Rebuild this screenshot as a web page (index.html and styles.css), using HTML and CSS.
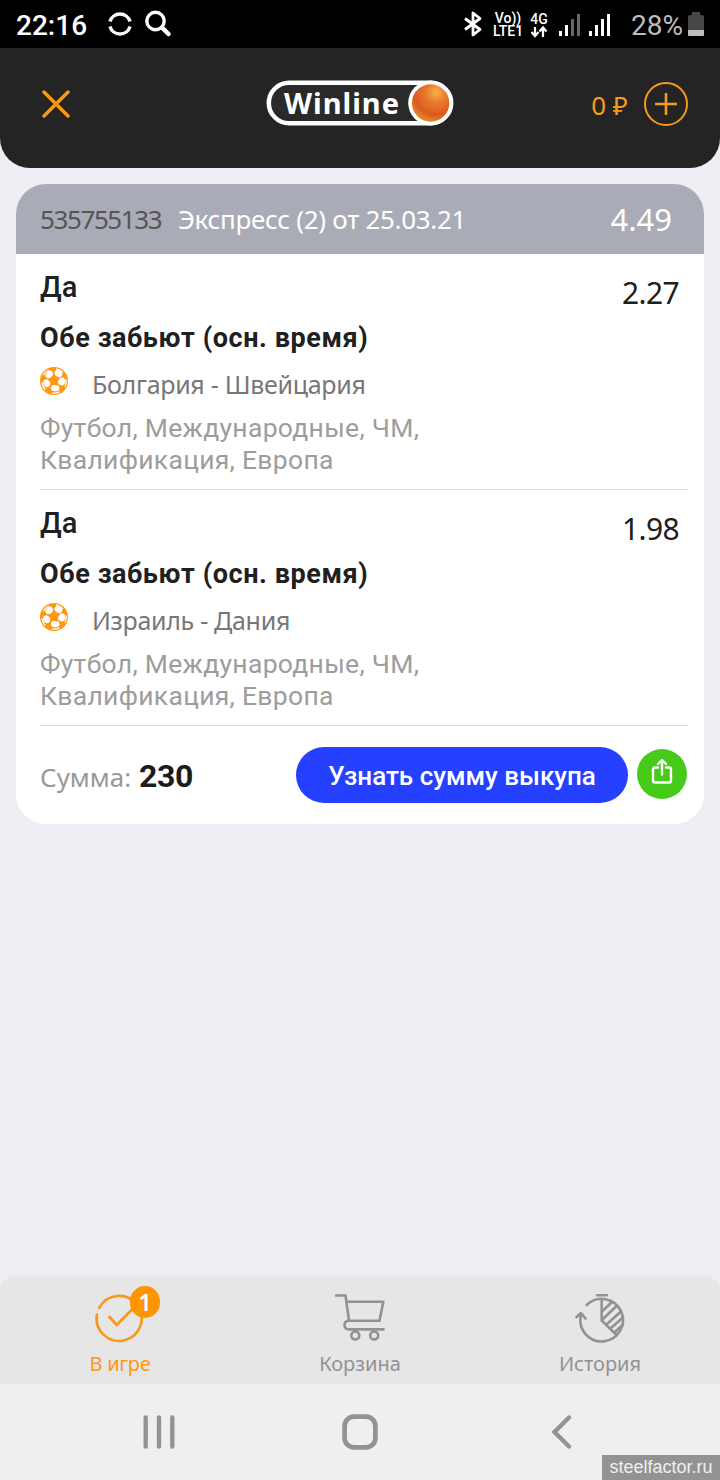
FILE: index.html
```html
<!DOCTYPE html>
<html lang="ru">
<head>
    <meta charset="UTF-8">
    <meta name="viewport" content="width=device-width, initial-scale=1.0">
    <title>Winline - В игре</title>
    <link rel="stylesheet" href="styles.css">
</head>
<body>

    <!-- Иконка мяча, используется в каждом событии -->
    <svg class="sprite" width="0" height="0">
        <symbol id="ball" viewBox="0 0 28 28">
            <circle cx="14" cy="14" r="14" fill="#ff9711"/>
            <circle cx="14" cy="14" r="12.2" fill="none" stroke="#fff" stroke-width="1.3" stroke-dasharray="7.7 7.63" stroke-dashoffset="2"/>
            <g fill="#fff">
                <ellipse cx="9.2" cy="7.4" rx="4.1" ry="3.2" transform="rotate(-38 9.2 7.4)"/>
                <ellipse cx="18.4" cy="6.6" rx="4.1" ry="3.1" transform="rotate(32 18.4 6.6)"/>
                <ellipse cx="21.8" cy="14.4" rx="4" ry="3.5" transform="rotate(-60 21.8 14.4)"/>
                <ellipse cx="15.2" cy="21" rx="4.3" ry="3.3" transform="rotate(5 15.2 21)"/>
                <ellipse cx="6.6" cy="16.2" rx="4" ry="3.4" transform="rotate(55 6.6 16.2)"/>
            </g>
            <path d="M14 8l1.4 4.1 4.2.2-3.2 2.7.9 4.1-3.5-2.2-3.7 1.9 1.1-4-3-2.9 4.3-.1z" fill="#ff9711"/>
        </symbol>
    </svg>

    <div class="status-bar">
        <span class="time">22:16</span>
        <svg class="sync" width="24" height="24" viewBox="0 0 24 24" fill="none" stroke="#fff" stroke-width="3.4">
            <path d="M2 9.5A10.4 10.4 0 0 1 22 9.5M2 14.5A10.4 10.4 0 0 0 22 14.5"/>
        </svg>
        <svg class="search" width="28" height="28" viewBox="0 0 28 28" fill="none" stroke="#fff">
            <circle cx="11.5" cy="11" r="8.7" stroke-width="3.4"/>
            <path d="M18 17.5L24.5 24" stroke-width="4.5" stroke-linecap="round"/>
        </svg>
        <svg class="bluetooth" width="20" height="26" viewBox="0 0 20 26" fill="none" stroke="#fff" stroke-width="2.8" stroke-linejoin="round">
            <path d="M2 7.5L17 18.5L10 24V2L17 7.5L2 18.5"/>
        </svg>
        <span class="net volte"><span>Vo))</span><span>LTE1</span></span>
        <span class="net data">
            <span>4G</span>
            <svg width="18" height="12" viewBox="0 0 18 12" fill="none" stroke="#fff" stroke-width="2.2">
                <path d="M5 1V9.5M1.5 6L5 10L8.5 6M13 11V2M9.5 5.5L13 1.5L16.5 5.5"/>
            </svg>
        </span>
        <svg class="signal" width="22" height="24" viewBox="0 0 22 24">
            <g fill="#fff"><rect x="0" y="19" width="3" height="5"/><rect x="6" y="13" width="3" height="11"/></g>
            <g fill="#666"><rect x="12" y="7" width="3" height="17"/><rect x="18" y="2" width="3" height="22"/></g>
        </svg>
        <svg class="signal-two" width="22" height="24" viewBox="0 0 22 24" fill="#fff">
            <rect x="0" y="19" width="3" height="5"/><rect x="6" y="13" width="3" height="11"/>
            <rect x="12" y="7" width="3" height="17"/><rect x="18" y="2" width="3" height="22"/>
        </svg>
        <span class="percent">28%</span>
        <svg class="battery" width="16" height="24" viewBox="0 0 16 24">
            <path d="M4 0h8v3h2q2 0 2 2v13H0V5q0-2 2-2h2z" fill="#464646"/>
            <path d="M0 18h16v5q0 1-1 1H1q-1 0-1-1z" fill="#bdbdbd"/>
        </svg>
    </div>

    <header class="header">
        <svg class="close" width="28" height="28" viewBox="0 0 28 28" stroke="#ff9711" stroke-width="3.4" stroke-linecap="round">
            <path d="M2 2L26 26M26 2L2 26"/>
        </svg>
        <svg class="logo" width="188" height="46" viewBox="0 0 188 46">
            <defs>
                <radialGradient id="orb" cx="0.65" cy="0.22" r="0.8">
                    <stop offset="0" stop-color="#f7b04c"/>
                    <stop offset="0.35" stop-color="#ea7a2b"/>
                    <stop offset="0.75" stop-color="#da5a1e"/>
                    <stop offset="1" stop-color="#e58a30"/>
                </radialGradient>
            </defs>
            <rect x="2.8" y="2.8" width="182.4" height="40.4" rx="20.2" fill="#2a2a2a" stroke="#fff" stroke-width="4.5"/>
            <circle cx="164.6" cy="23" r="22.4" fill="#fff"/>
            <circle cx="164.6" cy="23" r="18.7" fill="url(#orb)"/>
            <text class="logo-text" x="18" y="33.5" textLength="115">Winline</text>
        </svg>
        <div class="balance">
            <span>0 ₽</span>
            <svg width="44" height="44" viewBox="0 0 44 44" fill="none" stroke="#f89a1c" stroke-width="2">
                <circle cx="22" cy="22" r="21"/>
                <path d="M22 11V33M11 22H33" stroke-width="2.6"/>
            </svg>
        </div>
    </header>

    <main class="content">
        <div class="bet">
            <div class="bet-head">
                <span class="bet-id">535755133</span>
                <span class="bet-type">Экспресс (2) от 25.03.21</span>
                <span class="bet-total">4.49</span>
            </div>

            <div class="event">
                <div class="outcome"><span>Да</span><span class="odds">2.27</span></div>
                <div class="market">Обе забьют (осн. время)</div>
                <div class="teams">
                    <svg class="ball" width="28" height="28"><use href="#ball"/></svg>
                    <span>Болгария - Швейцария</span>
                </div>
                <div class="league">Футбол, Международные, ЧМ, Квалификация, Европа</div>
            </div>

            <div class="event">
                <div class="outcome"><span>Да</span><span class="odds">1.98</span></div>
                <div class="market">Обе забьют (осн. время)</div>
                <div class="teams">
                    <svg class="ball" width="28" height="28"><use href="#ball"/></svg>
                    <span>Израиль - Дания</span>
                </div>
                <div class="league">Футбол, Международные, ЧМ, Квалификация, Европа</div>
            </div>

            <div class="bet-footer">
                <span class="sum-label">Сумма:</span>
                <span class="sum">230</span>
                <button class="cashout">Узнать сумму выкупа</button>
                <button class="share">
                    <svg width="22" height="28" viewBox="0 0 22 28" fill="none" stroke="#fff" stroke-width="2.4" stroke-linecap="round" stroke-linejoin="round">
                        <path d="M7 9.5H4Q2 9.5 2 11.5V22.5Q2 24.5 4 24.5H18Q20 24.5 20 22.5V11.5Q20 9.5 18 9.5H15M11 16.5V2.5M7 6L11 2L15 6"/>
                    </svg>
                </button>
            </div>
        </div>
    </main>

    <div class="tabs">
        <div class="tab active">
            <div class="tab-icon">
                <svg width="50" height="50" viewBox="0 0 50 50" fill="none" stroke="#f7981d" stroke-width="2.7" stroke-linecap="round">
                    <path d="M4.2 15A22.5 22.5 0 1 1 2 21.5"/>
                    <path d="M14.5 24L21.7 32L38 15.5" stroke-width="2.8"/>
                </svg>
                <span class="badge">1</span>
            </div>
            <span class="tab-name">В игре</span>
        </div>
        <div class="tab">
            <div class="tab-icon">
                <svg width="50" height="50" viewBox="0 0 50 50" fill="none" stroke="#929295" stroke-width="2.6" stroke-linecap="round" stroke-linejoin="round">
                    <path d="M1 2.5H10.5L14 27.7H44.5L48.3 8.8H11.5M14 27.7Q9.5 27.7 9.5 32Q9.5 36.4 14 36.4H48.5"/>
                    <circle cx="20.3" cy="42.4" r="4"/>
                    <circle cx="39.2" cy="42.4" r="4"/>
                </svg>
            </div>
            <span class="tab-name">Корзина</span>
        </div>
        <div class="tab">
            <div class="tab-icon">
                <svg width="50" height="50" viewBox="0 0 50 50" fill="none" stroke="#929295" stroke-width="2.6" stroke-linecap="round" stroke-linejoin="round">
                    <path d="M22 2.2H32M11.7 12A21.3 21.3 0 1 1 6 22M1.5 24L6 20L10.5 25.5M26.7 6V27.5L41.5 42"/>
                    <path d="M28 17.5L37 9M28 26L42 12.5M32 31L46 18.5M36 35L48 24.5M40 39L48 31.5"/>
                </svg>
            </div>
            <span class="tab-name">История</span>
        </div>
    </div>

    <div class="android-nav">
        <svg width="34" height="36" viewBox="0 0 34 36" stroke="#939393" stroke-width="4.4" stroke-linecap="round">
            <path d="M3.7 3.5V32.5M17 3.5V32.5M30.3 3.5V32.5"/>
        </svg>
        <svg width="36" height="36" viewBox="0 0 36 36" fill="none" stroke="#939393" stroke-width="4.7">
            <rect x="2.6" y="2.6" width="30.8" height="30.8" rx="9.5"/>
        </svg>
        <svg width="34" height="36" viewBox="0 0 34 36" fill="none" stroke="#939393" stroke-width="4.4" stroke-linecap="round">
            <path d="M25 3.5L10.5 18L25 32.5"/>
        </svg>
        <span class="site">steelfactor.ru</span>
    </div>

</body>
</html>
```

FILE: styles.css
```css
* {
    box-sizing: border-box;
}
body {
    margin: 0;
    height: 1480px;
    display: flex;
    flex-direction: column;
    background-color: #efeef4;
    font-family: "Noto Sans", sans-serif;
    overflow: hidden;
}
svg {
    display: block;
    flex-shrink: 0;
}
.sprite {
    position: absolute;
}
button {
    border: none;
    padding: 0;
    cursor: pointer;
}

/* Строка состояния */
.status-bar {
    height: 48px;
    padding: 0 16px;
    display: flex;
    align-items: center;
    background-color: #000;
    color: #fff;
    font-family: Roboto, sans-serif;
}
.time {
    width: 92px;
    padding-top: 3px;
    font-size: 28px;
    font-weight: 500;
}
.search {
    margin-left: 12px;
}
.bluetooth {
    margin-left: 291px;
}
.net {
    padding-top: 2px;
    display: flex;
    flex-direction: column;
    align-items: center;
    font-size: 14px;
    font-weight: 500;
    line-height: 13px;
}
.volte {
    width: 30px;
    margin-left: 10px;
}
.data {
    width: 18px;
    margin-left: 7px;
}
.signal {
    margin-left: 11px;
}
.signal-two {
    margin-left: 8px;
}
.percent {
    width: 57px;
    margin-left: 20px;
    padding-top: 3px;
    font-size: 28px;
    color: #bdbdbd;
}

/* Шапка */
.header {
    height: 120px;
    padding: 0 32px 8px 42px;
    display: flex;
    align-items: center;
    background-color: #242424;
    border-radius: 0 0 30px 30px;
}
.logo {
    margin: -2px 0 0 196px;
}
.logo-text {
    font-family: "Noto Sans", sans-serif;
    font-size: 29px;
    font-weight: 700;
    fill: #fff;
}
.balance {
    margin-left: auto;
    display: flex;
    align-items: center;
    gap: 16px;
    color: #f89a1c;
    font-size: 26px;
}
.balance span {
    padding-top: 2px;
}

/* Карточка ставки */
.content {
    flex: 1;
    padding: 16px;
}
.bet {
    height: 640px;
    background-color: #fff;
    border-radius: 30px;
    overflow: hidden;
}
.bet-head {
    height: 70px;
    padding: 0 32px 0 24px;
    display: flex;
    align-items: center;
    background-color: #a9acb6;
    color: #fff;
    font-size: 26px;
}
.bet-id {
    width: 138px;
    color: #555;
    letter-spacing: -1.4px;
}
.bet-type {
    letter-spacing: -0.3px;
}
.bet-total {
    margin-left: auto;
    font-size: 31px;
}
.event {
    height: 236px;
    margin: 0 16px 0 24px;
    padding-top: 15px;
    border-bottom: 1px solid #dcdcdc;
    color: #202020;
    font-family: Roboto, sans-serif;
}
.outcome {
    height: 47px;
    padding-right: 9px;
    display: flex;
    justify-content: space-between;
    font-size: 29px;
    font-weight: 500;
    line-height: 36px;
}
.odds {
    font-family: "Noto Sans", sans-serif;
    font-size: 30px;
    font-weight: 400;
    letter-spacing: -0.6px;
    line-height: 47px;
}
.market {
    height: 44px;
    font-size: 27px;
    font-weight: 700;
    letter-spacing: 0.58px;
    line-height: 44px;
}
.teams {
    height: 52px;
    padding-bottom: 4px;
    display: flex;
    align-items: center;
    gap: 24px;
    color: #777;
    font-family: "Noto Sans", sans-serif;
    font-size: 25px;
    letter-spacing: -0.3px;
}
.ball {
    margin-top: -6px;
}
.league {
    width: 410px;
    color: #9d9d9d;
    font-size: 26.5px;
    letter-spacing: 0.3px;
    line-height: 32px;
}
.bet-footer {
    height: 98px;
    padding: 0 17px 0 24px;
    display: flex;
    align-items: center;
}
.sum-label {
    width: 99px;
    padding-top: 3px;
    color: #999;
    font-size: 26px;
}
.sum {
    padding-top: 2px;
    color: #1c1c1c;
    font-family: Roboto, sans-serif;
    font-size: 32px;
    font-weight: 700;
    letter-spacing: -0.3px;
}
.cashout {
    width: 332px;
    height: 56px;
    margin-left: auto;
    padding-top: 2px;
    border-radius: 28px;
    background-color: #2540ff;
    color: #fff;
    font-family: Roboto, sans-serif;
    font-size: 26px;
    font-weight: 500;
}
.share {
    width: 50px;
    height: 50px;
    margin: -2px 0 0 9px;
    padding-bottom: 4px;
    display: flex;
    justify-content: center;
    align-items: center;
    border-radius: 50%;
    background-color: #45cb18;
}

/* Нижнее меню */
.tabs {
    height: 107px;
    display: flex;
    background-color: #e6e6e6;
    border-radius: 16px 16px 0 0;
    box-shadow: 0 0 4px rgba(0, 0, 0, 0.06);
}
.tab {
    flex: 1;
    padding-top: 16px;
    display: flex;
    flex-direction: column;
    align-items: center;
    color: #929295;
}
.tab-icon {
    position: relative;
    height: 56px;
}
.tab-name {
    font-size: 20px;
    line-height: 30px;
}
.active {
    color: #ff9711;
}
.active .tab-name {
    letter-spacing: -0.3px;
}
.badge {
    position: absolute;
    left: 35px;
    top: -7px;
    width: 30px;
    height: 32px;
    border-radius: 16px;
    background-color: #ff9500;
    color: #fff;
    font-size: 23px;
    font-weight: 600;
    line-height: 32px;
    text-align: center;
}
.android-nav {
    position: relative;
    height: 96px;
    padding: 0 142px;
    display: flex;
    align-items: center;
    justify-content: space-between;
    background-color: #efefef;
}
.site {
    position: absolute;
    right: 0;
    bottom: 0;
    width: 118px;
    height: 25px;
    background-color: #939393;
    color: #efefef;
    font-family: "Liberation Sans", sans-serif;
    font-size: 18px;
    line-height: 25px;
    text-align: center;
}
```
